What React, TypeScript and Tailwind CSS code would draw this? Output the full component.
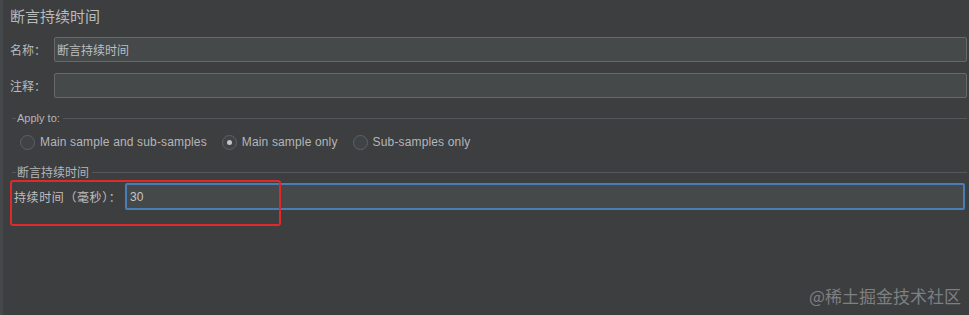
import React from 'react';

const cjk = { fontFamily: '"Noto Sans CJK SC", "Liberation Sans", sans-serif' };
const latin = { fontFamily: '"Liberation Sans", "Noto Sans CJK SC", sans-serif' };

function Radio({ label, checked }: { label: string; checked?: boolean }) {
  return (
    <div className="flex items-center gap-[5px]">
      <span className="w-[15px] h-[15px] rounded-full border border-[#5e6163] bg-[#404345] flex items-center justify-center">
        {checked && <span className="w-[5px] h-[5px] rounded-full bg-[#c4c4c4]" />}
      </span>
      <span className="text-[12px] tracking-[0.15px] text-[#b4b6b8]" style={latin}>
        {label}
      </span>
    </div>
  );
}

function TitledLine({ title, font, size }: { title: string; font: React.CSSProperties; size: string }) {
  return (
    <div className="flex items-center h-[12px] pl-[9px] pr-[2px]">
      <span className="w-[4px] border-t border-[#55585a]" />
      <span className={`px-[1px] leading-[12px] text-[#b4b6b8] ${size}`} style={font}>
        {title}
      </span>
      <span className="flex-1 border-t border-[#55585a] ml-[2px]" />
    </div>
  );
}

export default function App() {
  return (
    <div
      className="relative w-[969px] h-[315px] overflow-hidden bg-[#3d3e40] border-l-[3px] border-[#46494b] text-[#bbbbbb]"
      style={cjk}
    >
      {/* Title */}
      <div className="h-[37px] pl-[7px] pt-[5px] text-[15px] leading-[22px] text-[#b8babc]">断言持续时间</div>

      {/* Name / Comment */}
      <div className="flex flex-col gap-[11px] pr-[2px]">
        <div className="flex items-center">
          <span className="w-[51px] pl-[7px] text-[12px] text-[#b8babc]">名称：</span>
          <div className="flex-1 h-[25px] bg-[#45494a] border border-[#666869] rounded-[2px] flex items-center pl-[2px] text-[12px] text-[#bdbfc1]">
            断言持续时间
          </div>
        </div>
        <div className="flex items-center">
          <span className="w-[51px] pl-[7px] text-[12px] text-[#b8babc]">注释：</span>
          <div className="flex-1 h-[25px] bg-[#45494a] border border-[#666869] rounded-[2px]" />
        </div>
      </div>

      {/* Apply to */}
      <div className="mt-[14px]">
        <TitledLine title="Apply to:" font={latin} size="text-[11px]" />
        <div className="flex items-center gap-[15px] pl-[17px] h-[22px] mt-[7px]">
          <Radio label="Main sample and sub-samples" />
          <Radio label="Main sample only" checked />
          <Radio label="Sub-samples only" />
        </div>
      </div>

      {/* Duration */}
      <div className="mt-[13px]">
        <TitledLine title="断言持续时间" font={cjk} size="text-[12px]" />
        <div className="flex items-center mt-[5px] pr-[4px]">
          <span className="w-[122px] pl-[11px] text-[12px] tracking-[0.6px] text-[#bdbfc1]">持续时间（毫秒）：</span>
          <div className="flex-1 h-[27px] bg-[#45494a] border-2 border-[#4a7db5] rounded-[2px] flex items-center pl-[3px] text-[12px] text-[#c4c6c8]" style={latin}>
            30
          </div>
        </div>
      </div>

      {/* Red annotation box */}
      <div className="absolute left-[7px] top-[180px] w-[271px] h-[46px] border-2 border-[#e02a2a] rounded-[3px]" />

      {/* Watermark */}
      <div className="absolute right-[8px] bottom-[8px] text-[17px] leading-[22px] text-[#8e9093] opacity-80">@稀土掘金技术社区</div>
    </div>
  );
}
